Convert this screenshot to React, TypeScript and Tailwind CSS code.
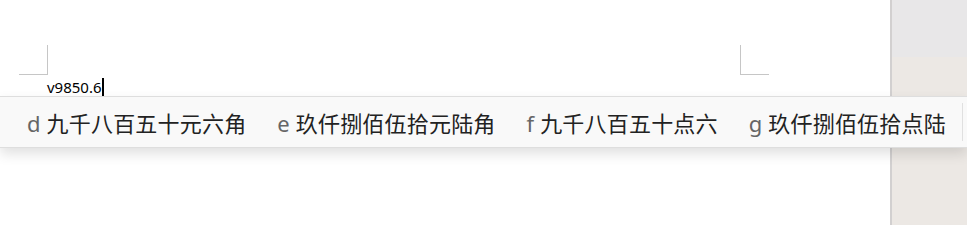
const candidates = [
  { key: 'd', text: '九千八百五十元六角' },
  { key: 'e', text: '玖仟捌佰伍拾元陆角' },
  { key: 'f', text: '九千八百五十点六' },
  { key: 'g', text: '玖仟捌佰伍拾点陆' },
];

const CandidateBar = () => (
  <div className="absolute left-0 right-0 top-[96px] h-[52px] border-y border-[#dedede] bg-[#f9f9f9] shadow-[0_6px_12px_rgba(0,0,0,0.12)]">
    <div className="flex h-full items-center pl-[27px] gap-[31px]">
      {candidates.map(c => (
        <div key={c.key} className="flex items-baseline gap-[6px] text-[22px] leading-none">
          <span className="text-[#666] font-['Noto_Sans',sans-serif]">{c.key}</span>
          <span className="text-[#222] tracking-[0.2px] font-['Noto_Sans_CJK_SC',sans-serif]">{c.text}</span>
        </div>
      ))}
    </div>
    {/* separator */}
    <div className="absolute right-[4px] top-[6px] bottom-[6px] w-px bg-[#e0e0e0]"></div>
  </div>
);

export default function App() {
  return (
    <div className="relative flex h-[225px] w-[967px] overflow-hidden bg-white">
      {/* document page */}
      <div className="w-[890px] shrink-0 bg-white pt-[45px]">
        <div className="flex justify-between pl-[19px] pr-[121px]">
          <div className="h-[30px] w-[29px] border-b border-r border-[#c6c6c6]"></div>
          <div className="h-[30px] w-[29px] border-b border-l border-[#c6c6c6]"></div>
        </div>
        <div className="flex items-end pl-[47px] pt-[2px] h-[22px]">
          <span className="border-b border-dotted border-black text-[15px] leading-[18px] text-black font-['Noto_Sans',sans-serif]">
            v9850.6
          </span>
          <span className="mb-[-1px] h-[20px] w-[2px] bg-black"></span>
        </div>
      </div>
      {/* right gray area */}
      <div className="flex flex-1 flex-col border-l-2 border-[#d2d0d0]">
        <div className="h-[57px] bg-[#e8e7e8]"></div>
        <div className="flex-1 bg-[#ece8e4]"></div>
      </div>
      <CandidateBar />
    </div>
  );
}
